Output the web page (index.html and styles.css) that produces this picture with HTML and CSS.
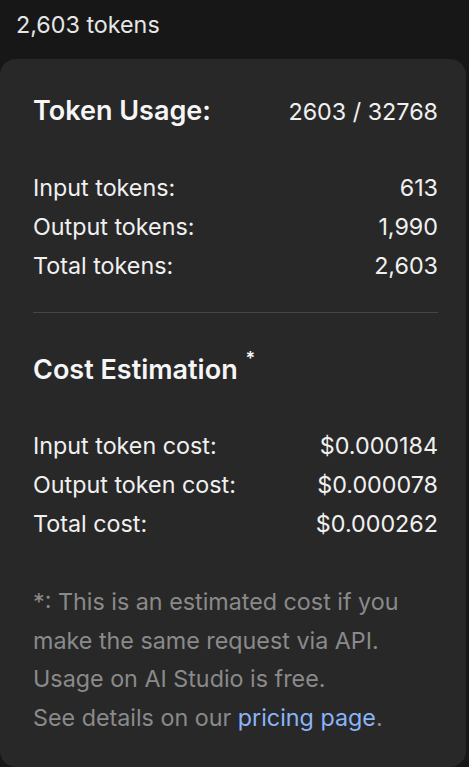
FILE: index.html
```html
<!DOCTYPE html>
<html>
<head>
<meta charset="utf-8">
<link rel="stylesheet" href="styles.css">
</head>
<body>
<div class="topbar">2,603 tokens</div>
<div class="card">
  <div class="head-row">
    <span class="title">Token Usage:</span>
    <span class="ratio">2603 / 32768</span>
  </div>
  <div class="rows">
    <div class="row"><span>Input tokens:</span><span>613</span></div>
    <div class="row"><span>Output tokens:</span><span>1,990</span></div>
    <div class="row"><span>Total tokens:</span><span>2,603</span></div>
  </div>
  <hr class="divider">
  <div class="title cost-title">Cost Estimation <sup class="star">*</sup></div>
  <div class="rows cost-rows">
    <div class="row"><span>Input token cost:</span><span>$0.000184</span></div>
    <div class="row"><span>Output token cost:</span><span>$0.000078</span></div>
    <div class="row"><span>Total cost:</span><span>$0.000262</span></div>
  </div>
  <p class="note">*: This is an estimated cost if you make the same request via API.<br>Usage on AI Studio is free.<br>See details on our <a class="link" href="#">pricing page</a>.</p>
</div>
</body>
</html>
```
FILE: styles.css
```css
html, body {
  margin: 0;
  padding: 0;
  background: #171717;
  font-family: Inter, "Noto Sans", sans-serif;
  color: #f0f0f0;
}
.topbar {
  height: 59px;
  box-sizing: border-box;
  padding: 10px 0 0 16px;
  font-size: 23.3px;
  line-height: 30px;
  color: #e6e6e6;
}
.card {
  width: 466px;
  height: 708px;
  box-sizing: border-box;
  background: #282828;
  border-radius: 16px;
  padding: 34px 28px 0 33px;
}
.head-row {
  display: flex;
  justify-content: space-between;
  align-items: baseline;
}
.title {
  font-size: 27px;
  font-weight: 600;
  line-height: 36px;
  color: #f6f6f6;
}
.ratio {
  font-size: 23.3px;
}
.rows {
  margin-top: 39px;
}
.cost-rows {
  margin-top: 38px;
}
.row {
  display: flex;
  justify-content: space-between;
  font-size: 23.3px;
  line-height: 39px;
}
.divider {
  border: 0;
  border-top: 1px solid #454545;
  margin: 27px 0 0;
}
.cost-title {
  margin-top: 39px;
}
.star {
  font-size: 18px;
  vertical-align: 14px;
  line-height: 0;
  margin-left: 1px;
}
.note {
  margin: 40px 0 0;
  max-width: 395px;
  font-size: 23.3px;
  line-height: 38.5px;
  color: #8a8a8a;
}
.link {
  color: #8ab4f8;
  text-decoration: none;
}
```
